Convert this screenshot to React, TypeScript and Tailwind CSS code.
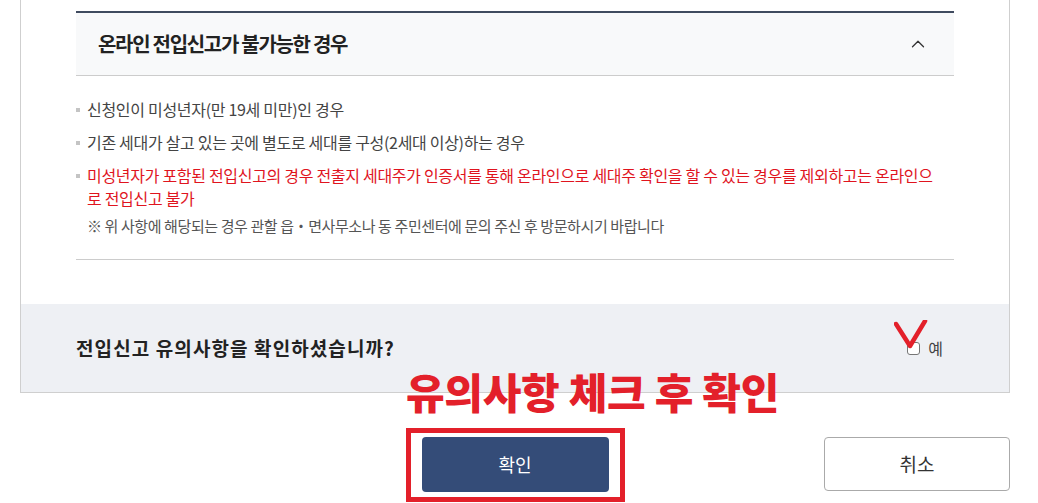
import { ChevronUp } from "lucide-react";

const font = { fontFamily: '"Noto Sans CJK KR", "Noto Sans", sans-serif' };

const items = [
  { text: "신청인이 미성년자(만 19세 미만)인 경우", red: false },
  { text: "기존 세대가 살고 있는 곳에 별도로 세대를 구성(2세대 이상)하는 경우", red: false },
];

function Bullet({ red, children }: { red?: boolean; children: React.ReactNode }) {
  return (
    <li className="flex">
      <span className="mt-[10px] mr-[7px] h-[4px] w-[4px] shrink-0 bg-[#c4c4c4]" />
      <span className={red ? "text-[#e0141e]" : "text-[#444]"}>{children}</span>
    </li>
  );
}

export default function App() {
  return (
    <div className="relative h-[503px] w-full overflow-hidden bg-white" style={font}>
      {/* outer panel, top edge is cut off by the viewport */}
      <div className="ml-[20px] w-[990px] border-x border-b border-[#cfcfcf]">
        <div className="px-[55px] pt-[11px]">
          <div className="border-t-2 border-[#3f4b5f]">
            <div className="flex h-[63px] items-center justify-between border-b border-[#cccccc] bg-[#f8f9fa] pl-[22px] pr-[25px]">
              <h3 className="text-[20px] font-bold tracking-[-1.3px] text-[#222]">온라인 전입신고가 불가능한 경우</h3>
              <ChevronUp size={22} strokeWidth={1.4} className="text-[#333]" />
            </div>
            <div className="border-b border-[#cccccc] pt-[22px] pb-[22px]">
              <ul className="flex flex-col gap-[10px] text-[16px] leading-[23px] tracking-[-0.3px]">
                {items.map((it) => (
                  <Bullet key={it.text}>{it.text}</Bullet>
                ))}
                <Bullet red>
                  미성년자가 포함된 전입신고의 경우 전출지 세대주가 인증서를 통해 온라인으로 세대주 확인을 할 수 있는 경우를 제외하고는 온라인으
                  <br />로 전입신고 불가
                </Bullet>
              </ul>
              <p className="mt-[4px] pl-[11px] text-[15px] leading-[23px] tracking-[-0.4px] text-[#555]">
                ※ 위 사항에 해당되는 경우 관할 읍・면사무소나 동 주민센터에 문의 주신 후 방문하시기 바랍니다
              </p>
            </div>
          </div>
        </div>

        <div className="mt-[44px] flex h-[88px] items-center justify-between bg-[#eef0f4] pl-[55px] pr-[66px]">
          <p className="text-[19px] font-bold tracking-[1.1px] text-[#222]">전입신고 유의사항을 확인하셨습니까?</p>
          <label className="relative flex items-center gap-[8px] text-[16px] text-[#444]">
            <span className="h-[13px] w-[13px] rounded-[3px] border border-[#767676] bg-white" />
            예
            {/* red check annotation */}
            <svg className="absolute -left-[13px] -top-[16px]" width="34" height="30" viewBox="0 0 34 30">
              <path d="M2 4 L16 26 L31 1" fill="none" stroke="#e3202a" strokeWidth="4.5" strokeLinejoin="round" strokeLinecap="round" />
            </svg>
          </label>
        </div>
      </div>

      {/* annotation caption */}
      <p className="absolute left-[406px] top-[370px] text-[42px] font-black leading-none tracking-[-0.3px] text-[#e3202a]">
        유의사항 체크 후 확인
      </p>

      <div className="mt-[44px] ml-[20px] grid w-[990px] grid-cols-[1fr_auto_1fr] items-start">
        <div />
        <div className="relative">
          <button className="h-[55px] w-[187px] rounded-[4px] bg-[#344c78] text-[18px] text-white">확인</button>
          <span className="absolute -left-[16px] -top-[9px] -right-[16px] -bottom-[10px] border-[5px] border-[#e3202a]" />
        </div>
        <div className="flex justify-end">
          <button className="h-[54px] w-[186px] rounded-[4px] border border-[#aaaaaa] bg-white text-[19px] text-[#333]">취소</button>
        </div>
      </div>
    </div>
  );
}
